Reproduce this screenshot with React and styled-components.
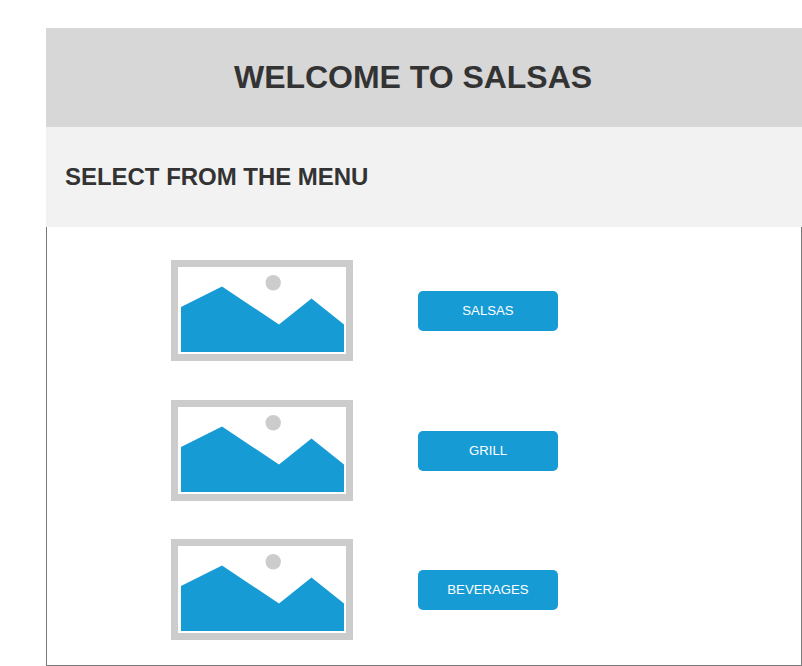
import React from "react";
import styled, { createGlobalStyle } from "styled-components";

const GlobalStyle = createGlobalStyle`
  * { box-sizing: border-box; }
  body { margin: 0; background: #fff; font-family: "Liberation Sans", Arial, sans-serif; color: #333; }
`;

const Page = styled.main`
  width: 802px;
  height: 666px;
  padding: 28px 0 0 46px;
  display: flex;
  flex-direction: column;
  overflow: hidden;
`;

const Banner = styled.header`
  height: 99px;
  flex: none;
  background: #d7d7d7;
  display: flex;
  padding: 31px 0 0 188px;
`;

const Title = styled.h1`
  margin: 0;
  font-size: 32px;
  line-height: 37px;
  font-weight: 700;
  letter-spacing: -0.03px;
  white-space: nowrap;
`;

const SubBanner = styled.section`
  height: 100px;
  flex: none;
  background: #f2f2f2;
  padding: 36px 0 0 19px;
`;

const Subtitle = styled.h2`
  margin: 0;
  font-size: 24px;
  line-height: 27px;
  font-weight: 700;
  letter-spacing: -0.03px;
  white-space: nowrap;
`;

const Menu = styled.section`
  flex: 1;
  border: 1px solid #797979;
  border-top: 0;
  padding: 33px 0 0 124px;
  display: flex;
  flex-direction: column;
`;

const MenuRow = styled.div`
  height: ${(p) => p.$height}px;
  flex: none;
  display: flex;
  align-items: flex-start;
  gap: 65px;
`;

const Picture = styled.svg`
  width: 182px;
  height: 101px;
  display: block;
`;

const MenuButton = styled.button`
  width: 140px;
  height: 40px;
  margin: 31px 0 0;
  padding: 0 0 2px;
  border: 0;
  border-radius: 5px;
  background: #169bd5;
  color: #fff;
  font: 13.2px/15px "Liberation Sans", Arial, sans-serif;
`;

const items = [
  { label: "SALSAS", height: 140 },
  { label: "GRILL", height: 139 },
  { label: "BEVERAGES", height: 101 },
];

function Placeholder() {
  return (
    <Picture viewBox="0 0 182 101" aria-hidden="true">
      <rect x="3.5" y="3.5" width="175" height="94" fill="#fff" stroke="#ccc" strokeWidth="7" />
      <circle cx="102.2" cy="22.7" r="7.7" fill="#ccc" />
      <path d="M10 47L51 26.5L108 64.5L140.5 38.5L173 64.5V92H10Z" fill="#169bd5" />
    </Picture>
  );
}

export default function App() {
  return (
    <Page>
      <GlobalStyle />
      <Banner><Title>WELCOME TO SALSAS</Title></Banner>
      <SubBanner><Subtitle>SELECT FROM THE MENU</Subtitle></SubBanner>
      <Menu>
        {items.map((item) => (
          <MenuRow key={item.label} $height={item.height}>
            <Placeholder />
            <MenuButton>{item.label}</MenuButton>
          </MenuRow>
        ))}
      </Menu>
    </Page>
  );
}
